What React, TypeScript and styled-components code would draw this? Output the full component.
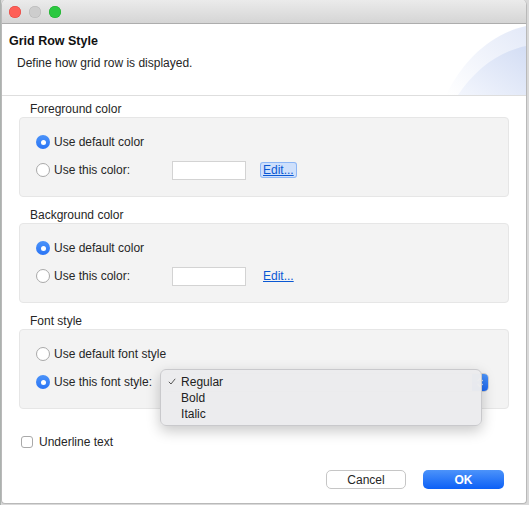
import styled, { createGlobalStyle } from 'styled-components'

const GlobalStyle = createGlobalStyle`
  html, body {
    margin: 0;
    padding: 0;
    background: #d9d9d9;
    font-family: "Liberation Sans", Arial, sans-serif;
    font-size: 12px;
    color: #262626;
  }
`

const Page = styled.div`
  width: 529px;
  height: 505px;
  display: flex;
  background: linear-gradient(90deg, #8f9a94 0px, #c9c9c9 1px, #d9d9d9 1px);
`

const Window = styled.div`
  width: 524px;
  height: 503px;
  margin-left: 1px;
  background: #fff;
  border: 1px solid #b9b9b9;
  border-top: none;
  border-radius: 5px 5px 4px 4px;
  display: flex;
  flex-direction: column;
  overflow: hidden;
`

const TitleBar = styled.div`
  height: 24px;
  flex: none;
  display: flex;
  align-items: center;
  gap: 8px;
  padding-left: 7px;
  background: linear-gradient(#ebebeb, #d5d5d5);
  border-bottom: 1px solid #adadad;
  box-sizing: border-box;
`

const Light = styled.span<{ $color: string; $edge: string }>`
  width: 12px;
  height: 12px;
  border-radius: 50%;
  background: ${p => p.$color};
  box-shadow: inset 0 0 0 0.5px ${p => p.$edge};
`

const Header = styled.div`
  height: 71px;
  flex: none;
  display: flex;
  border-bottom: 1px solid #dedede;
`

const HeaderText = styled.div`
  flex: 1;
  padding: 9px 0 0 7px;
`

const Title = styled.div`
  font-weight: bold;
  font-size: 12.5px;
  line-height: 16px;
  color: #111;
`

const Subtitle = styled.div`
  margin: 6px 0 0 8px;
  line-height: 16px;
`

const Content = styled.div`
  flex: 1;
  display: flex;
  flex-direction: column;
  padding: 5px 17px 0 17px;
`

const GroupLabel = styled.div<{ $top?: number }>`
  line-height: 16px;
  padding-left: 11px;
  margin-top: ${p => p.$top ?? 0}px;
`

const GroupBox = styled.div`
  height: 80px;
  box-sizing: border-box;
  background: #f3f3f3;
  border: 1px solid #e6e6e6;
  border-radius: 4px;
  padding: 14px 0 0 16px;
  display: flex;
  flex-direction: column;
  gap: 8px;
`

const Row = styled.div`
  height: 20px;
  display: flex;
  align-items: center;
`

const Radio = styled.span<{ $on?: boolean }>`
  width: 14px;
  height: 14px;
  box-sizing: border-box;
  border-radius: 50%;
  flex: none;
  display: flex;
  align-items: center;
  justify-content: center;
  background: ${p => (p.$on ? 'linear-gradient(#4b93f9, #2a74f5)' : '#fff')};
  border: ${p => (p.$on ? 'none' : '1px solid #a9a9a9')};
  margin-right: 4px;
  &::after {
    content: '';
    display: ${p => (p.$on ? 'block' : 'none')};
    width: 5px;
    height: 5px;
    border-radius: 50%;
    background: #fff;
  }
`

const RowLabel = styled.span<{ $w?: number }>`
  width: ${p => (p.$w ? `${p.$w}px` : 'auto')};
  flex: none;
  white-space: nowrap;
`

const Swatch = styled.span`
  width: 74px;
  height: 19px;
  box-sizing: border-box;
  background: #fff;
  border: 1px solid #d3d3d3;
`

const EditLink = styled.span<{ $focus?: boolean }>`
  margin-left: 15px;
  padding: 0 2px;
  color: #0a58d3;
  text-decoration: underline;
  line-height: 14px;
  background: ${p => (p.$focus ? '#cfe0fb' : 'transparent')};
  box-shadow: ${p => (p.$focus ? '0 0 0 1px #8db6f5' : 'none')};
  border-radius: 2px;
`

const PopupWrap = styled.div`
  position: relative;
  width: 329px;
  height: 19px;
  margin-left: 8px;
`

const Popup = styled.div`
  height: 19px;
  box-sizing: border-box;
  background: #fff;
  border: 1px solid #d0d0d0;
  border-radius: 5px;
  display: flex;
  justify-content: flex-end;
  overflow: hidden;
`

const PopupArrow = styled.span`
  width: 16px;
  background: linear-gradient(#4b93f9, #1f6af5);
  display: flex;
  align-items: center;
  justify-content: center;
`

const Menu = styled.div`
  position: absolute;
  left: 0;
  top: -4px;
  width: 322px;
  box-sizing: border-box;
  padding: 4px 0 3px;
  background: rgba(236, 236, 238, 0.98);
  border: 1px solid #c9c9cc;
  border-radius: 6px;
  box-shadow: 0 5px 14px rgba(0, 0, 0, 0.22);
`

const MenuItem = styled.div`
  height: 16px;
  line-height: 16px;
  display: flex;
  align-items: center;
  padding-left: 7px;
  color: #222;
`

const Check = styled.span`
  width: 13px;
  display: flex;
  align-items: center;
`

const CheckRow = styled.div`
  display: flex;
  align-items: center;
  gap: 6px;
  margin-top: 25px;
  line-height: 16px;
`

const CheckBox = styled.span`
  width: 12px;
  height: 12px;
  box-sizing: border-box;
  background: #fff;
  border: 1px solid #a9a9a9;
  border-radius: 3px;
  margin-left: 2px;
`

const Buttons = styled.div`
  display: flex;
  justify-content: flex-end;
  gap: 17px;
  margin-top: 20px;
  padding-right: 5px;
`

const Button = styled.button<{ $primary?: boolean }>`
  width: ${p => (p.$primary ? 81 : 80)}px;
  height: 19px;
  padding: 0;
  font-family: "Liberation Sans", Arial, sans-serif;
  font-size: 12px;
  border-radius: 5px;
  color: ${p => (p.$primary ? '#fff' : '#262626')};
  font-weight: ${p => (p.$primary ? 'bold' : 'normal')};
  background: ${p => (p.$primary ? 'linear-gradient(#4c93fa, #0c60f6)' : '#fff')};
  border: ${p => (p.$primary ? 'none' : '1px solid #c6c6c6')};
`

const Decoration = () => (
  <svg width="80" height="71" viewBox="0 0 80 71">
    <defs>
      <linearGradient id="d1" x1="0" y1="1" x2="1" y2="0">
        <stop offset="0" stopColor="#ffffff" />
        <stop offset="1" stopColor="#e3e9f8" />
      </linearGradient>
      <linearGradient id="d2" x1="0" y1="1" x2="1" y2="0">
        <stop offset="0" stopColor="#f3f6fd" />
        <stop offset="1" stopColor="#d3ddf4" />
      </linearGradient>
    </defs>
    <path d="M0 71 C 18 35, 45 10, 80 2 L80 71 Z" fill="url(#d1)" />
    <path d="M12 71 C 30 45, 52 28, 80 22 L80 71 Z" fill="url(#d2)" />
  </svg>
)

const Chevrons = () => (
  <svg width="8" height="11" viewBox="0 0 8 11">
    <path d="M1.5 4 L4 1.5 L6.5 4 M1.5 7 L4 9.5 L6.5 7" stroke="#fff" strokeWidth="1.3" fill="none" />
  </svg>
)

const CheckMark = () => (
  <svg width="8" height="7" viewBox="0 0 8 7">
    <path d="M0.8 3.8 L3 6 L7.2 0.8" stroke="#555" strokeWidth="1" fill="none" />
  </svg>
)

export default function App() {
  return (
    <>
      <GlobalStyle />
      <Page>
        <Window>
          <TitleBar>
            <Light $color="#fe5f57" $edge="#e0443e" />
            <Light $color="#cdcdcd" $edge="#b5b5b5" />
            <Light $color="#2bc840" $edge="#1aab29" />
          </TitleBar>
          <Header>
            <HeaderText>
              <Title>Grid Row Style</Title>
              <Subtitle>Define how grid row is displayed.</Subtitle>
            </HeaderText>
            <Decoration />
          </Header>
          <Content>
            <GroupLabel>Foreground color</GroupLabel>
            <GroupBox>
              <Row>
                <Radio $on />
                <RowLabel>Use default color</RowLabel>
              </Row>
              <Row>
                <Radio />
                <RowLabel $w={118}>Use this color:</RowLabel>
                <Swatch />
                <EditLink $focus>Edit...</EditLink>
              </Row>
            </GroupBox>

            <GroupLabel $top={10}>Background color</GroupLabel>
            <GroupBox>
              <Row>
                <Radio $on />
                <RowLabel>Use default color</RowLabel>
              </Row>
              <Row>
                <Radio />
                <RowLabel $w={118}>Use this color:</RowLabel>
                <Swatch />
                <EditLink>Edit...</EditLink>
              </Row>
            </GroupBox>

            <GroupLabel $top={10}>Font style</GroupLabel>
            <GroupBox>
              <Row>
                <Radio />
                <RowLabel>Use default font style</RowLabel>
              </Row>
              <Row>
                <Radio $on />
                <RowLabel>Use this font style:</RowLabel>
                <PopupWrap>
                  <Popup>
                    <PopupArrow>
                      <Chevrons />
                    </PopupArrow>
                  </Popup>
                  <Menu>
                    <MenuItem>
                      <Check>
                        <CheckMark />
                      </Check>
                      Regular
                    </MenuItem>
                    <MenuItem>
                      <Check />
                      Bold
                    </MenuItem>
                    <MenuItem>
                      <Check />
                      Italic
                    </MenuItem>
                  </Menu>
                </PopupWrap>
              </Row>
            </GroupBox>

            <CheckRow>
              <CheckBox />
              <span>Underline text</span>
            </CheckRow>

            <Buttons>
              <Button>Cancel</Button>
              <Button $primary>OK</Button>
            </Buttons>
          </Content>
        </Window>
      </Page>
    </>
  )
}
